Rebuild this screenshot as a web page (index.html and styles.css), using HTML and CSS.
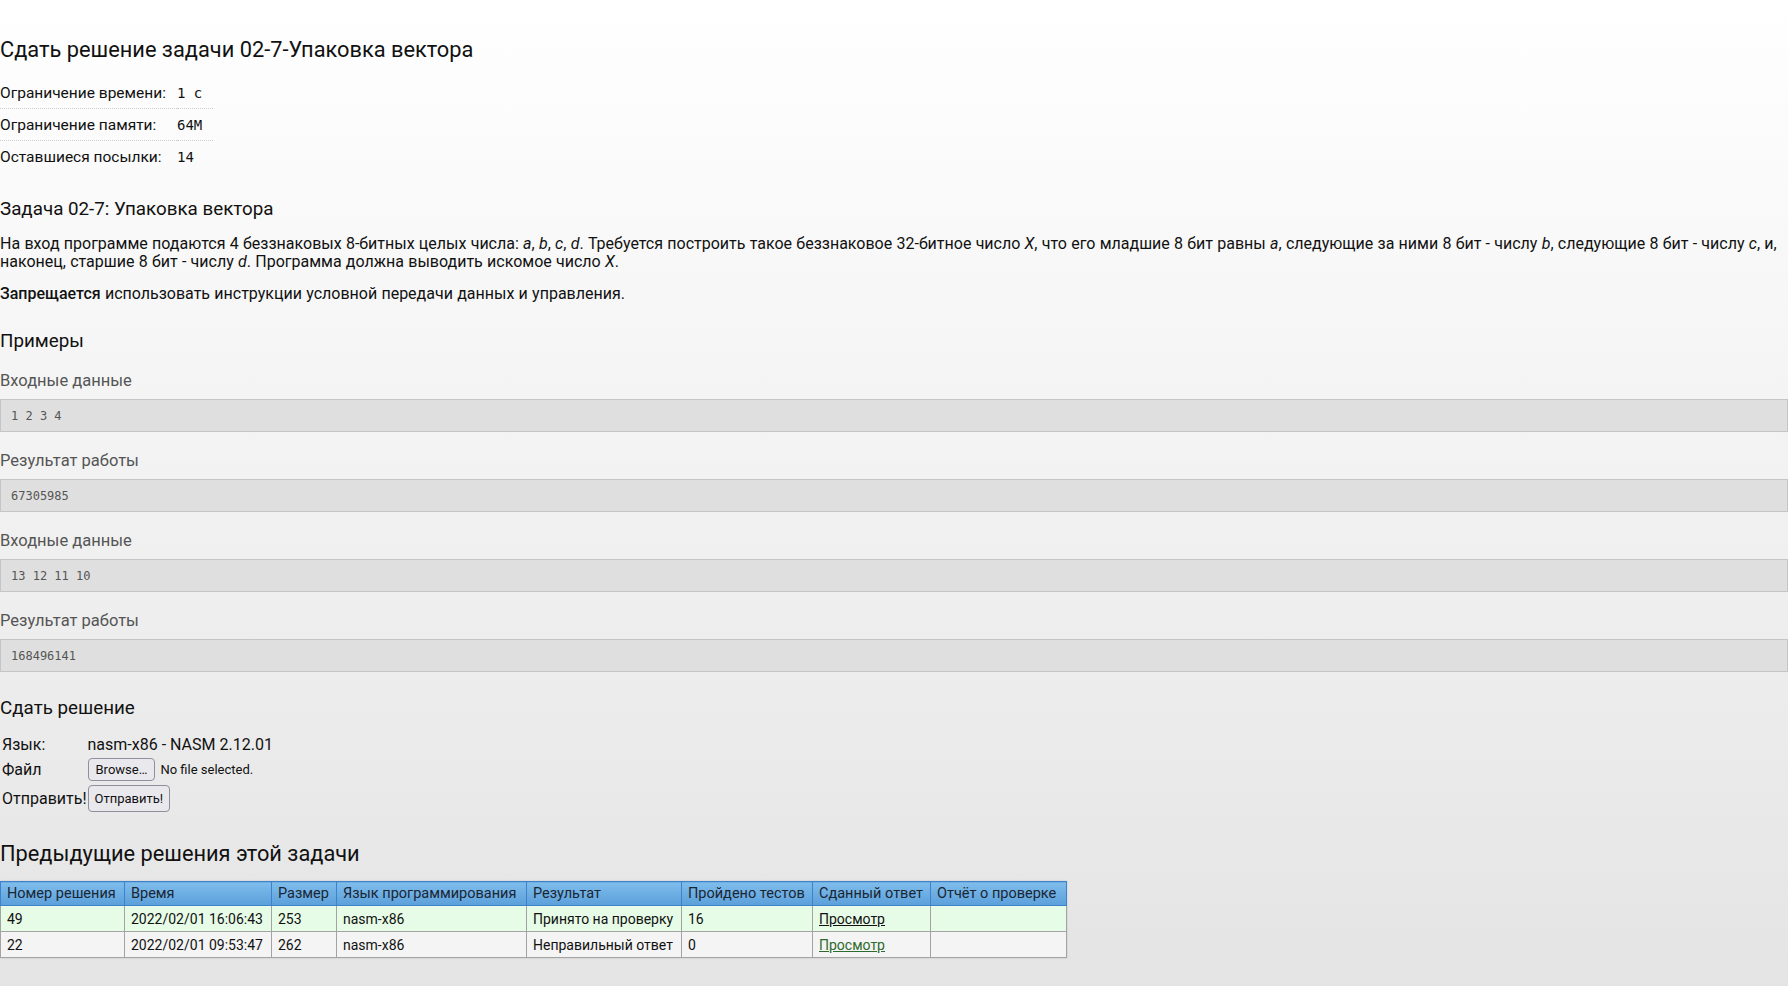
FILE: index.html
```html
<!DOCTYPE html>
<html lang="ru">
<head>
<meta charset="utf-8">
<title>Сдать решение задачи 02-7-Упаковка вектора</title>
<link rel="stylesheet" href="styles.css">
</head>
<body>
<main class="page">
  <h1 class="title">Сдать решение задачи 02-7-Упаковка вектора</h1>

  <div class="limits">
    <div class="lim-label">Ограничение времени:</div><div class="lim-value">1 с</div>
    <div class="lim-label">Ограничение памяти:</div><div class="lim-value">64M</div>
    <div class="lim-label last">Оставшиеся посылки:</div><div class="lim-value last">14</div>
  </div>

  <h2 class="sub">Задача 02-7: Упаковка вектора</h2>
  <p class="text">На вход программе подаются 4 беззнаковых 8-битных целых числа: <i>a</i>, <i>b</i>, <i>c</i>, <i>d</i>. Требуется построить такое беззнаковое 32-битное число <i>X</i>, что его младшие 8 бит равны <i>a</i>, следующие за ними 8 бит - числу <i>b</i>, следующие 8 бит - числу <i>c</i>, и,<br>наконец, старшие 8 бит - числу <i>d</i>. Программа должна выводить искомое число <i>X</i>.</p>
  <p class="text"><b>Запрещается</b> использовать инструкции условной передачи данных и управления.</p>

  <h2 class="sub examples">Примеры</h2>
  <div class="ex-label">Входные данные</div>
  <pre class="ex-box">1 2 3 4</pre>
  <div class="ex-label">Результат работы</div>
  <pre class="ex-box">67305985</pre>
  <div class="ex-label">Входные данные</div>
  <pre class="ex-box">13 12 11 10</pre>
  <div class="ex-label">Результат работы</div>
  <pre class="ex-box">168496141</pre>

  <h2 class="sub submit">Сдать решение</h2>
  <table class="form">
    <tr><td>Язык:</td><td>nasm-x86 - NASM 2.12.01</td></tr>
    <tr><td>Файл</td><td><button class="btn">Browse…</button><span class="nofile">No file selected.</span></td></tr>
    <tr><td>Отправить!</td><td><button class="btn btn-send">Отправить!</button></td></tr>
  </table>

  <h1 class="title prev">Предыдущие решения этой задачи</h1>
  <table class="runs">
    <thead>
      <tr><th>Номер решения</th><th>Время</th><th>Размер</th><th>Язык программирования</th><th>Результат</th><th>Пройдено тестов</th><th>Сданный ответ</th><th>Отчёт о проверке</th></tr>
    </thead>
    <tbody>
      <tr class="ok"><td>49</td><td>2022/02/01 16:06:43</td><td>253</td><td>nasm-x86</td><td>Принято на проверку</td><td>16</td><td><a href="#" class="link">Просмотр</a></td><td></td></tr>
      <tr class="bad"><td>22</td><td>2022/02/01 09:53:47</td><td>262</td><td>nasm-x86</td><td>Неправильный ответ</td><td>0</td><td><a href="#" class="link visited">Просмотр</a></td><td></td></tr>
    </tbody>
  </table>
</main>
</body>
</html>
```

FILE: styles.css
```css
html {
  background: linear-gradient(to bottom, #ffffff 0px, #e4e4e4 986px) no-repeat;
  background-color: #e4e4e4;
  min-height: 100%;
}
body {
  margin: 0;
  font-family: Roboto, "Liberation Sans", sans-serif;
  color: #111;
}
.page {
  padding-top: 38px;
  padding-bottom: 20px;
}
.title {
  margin: 0;
  font-size: 21.8px;
  line-height: 24px;
  font-weight: 400;
}
.limits {
  margin-top: 15px;
  display: grid;
  grid-template-columns: 177px 36px;
  width: 213px;
  font-size: 15.5px;
}
.lim-label, .lim-value {
  height: 31px;
  display: flex;
  align-items: center;
  border-bottom: 1px dotted #cfcfcf;
  white-space: nowrap;
}
.lim-label.last, .lim-value.last {
  border-bottom-color: transparent;
}
.lim-value {
  font-family: "DejaVu Sans Mono", "Liberation Mono", monospace;
  font-size: 14px;
}
.sub {
  margin: 25px 0 0;
  font-size: 18.8px;
  line-height: 22px;
  font-weight: 400;
}
.text {
  margin: 15px 0 0;
  font-size: 16px;
  line-height: 18px;
  word-spacing: 0.3px;
}
.text + .text { margin-top: 14px; }
.text b { font-weight: 500; }
.examples { margin-top: 27px; }
.ex-label {
  margin-top: 19px;
  font-size: 16.5px;
  line-height: 20px;
  color: #555;
}
.ex-box {
  margin: 8px 0 0;
  height: 31px;
  display: flex;
  align-items: center;
  padding: 0 10px;
  background: #dfdfdf;
  border: 1px solid #c5c5c5;
  font-family: "DejaVu Sans Mono", "Liberation Mono", monospace;
  font-size: 12px;
  color: #555;
}
.submit { margin-top: 25px; }
.form {
  margin-top: 13px;
  border-spacing: 0 2px;
  font-size: 16px;
}
.form td {
  padding: 1px 0 1px 2px;
  vertical-align: middle;
}
.form td + td { padding-left: 1px; }
.btn {
  font-family: Roboto, "Liberation Sans", sans-serif;
  font-size: 13px;
  height: 23px;
  padding: 0 7px;
  background: #e9e9ed;
  border: 1px solid #8f8f9d;
  border-radius: 4px;
  color: #111;
}
.btn-send { height: 27px; padding: 0 6px; }
.nofile {
  font-size: 13px;
  margin-left: 5px;
}
.prev { margin-top: 27px; }
.runs {
  margin-top: 15px;
  border-collapse: collapse;
  table-layout: fixed;
  width: 1066px;
  border: 1px solid #999;
  box-shadow: 0 0 2px rgba(0,0,0,0.15);
}
.runs th {
  font-size: 14.5px;
  font-weight: 400;
  text-align: left;
  height: 24px;
  padding: 0 6px;
  color: #1b2633;
  background: linear-gradient(to bottom, #7fbdeb, #5b9fdb);
  border: 1px solid #3f82cc;
  white-space: nowrap;
  overflow: hidden;
  box-sizing: border-box;
}
.runs td {
  font-size: 14px;
  height: 25px;
  padding: 0 6px;
  border: 1px solid #a3a3a3;
  white-space: nowrap;
}
.runs th:nth-child(1) { width: 124px; }
.runs th:nth-child(2) { width: 147px; }
.runs th:nth-child(3) { width: 65px; }
.runs th:nth-child(4) { width: 190px; }
.runs th:nth-child(5) { width: 155px; }
.runs th:nth-child(6) { width: 131px; }
.runs th:nth-child(7) { width: 118px; }
.runs th:nth-child(8) { width: 136px; }
.ok td { background: #e7fce7; }
.bad td { background: #f4f4f4; }
.link { color: #111; }
.link.visited { color: #2d6a2d; }
```
